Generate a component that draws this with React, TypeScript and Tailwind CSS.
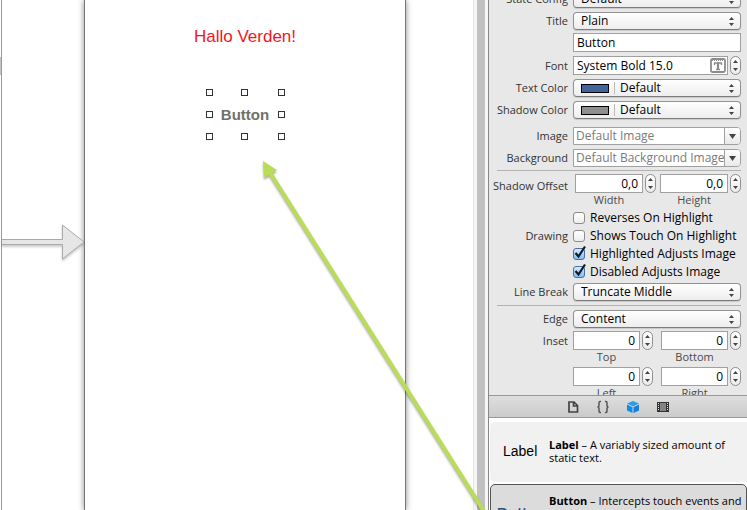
import type { ReactNode } from 'react';

function UpDown() {
  return (
    <svg className="h-[9px] w-[5px] shrink-0" viewBox="0 0 5 9" fill="#444" aria-hidden="true">
      <path d="M2.500 0 5 3H0zM2.500 9 0 6h5z" />
    </svg>
  );
}

function Row({ label, htmlFor, children }: { label: string; htmlFor?: string; children: ReactNode }) {
  return (
    <div className="flex items-center gap-[5px]">
      <label htmlFor={htmlFor} className="w-[79px] shrink-0 whitespace-nowrap text-right text-[11px] leading-[14px] text-[#333]">
        {label}
      </label>
      <div className="flex min-w-0 flex-1 items-center">{children}</div>
    </div>
  );
}

function Popup({ id, value, swatch }: { id: string; value: string; swatch?: string }) {
  return (
    <div className="flex h-[18px] min-w-0 flex-1 items-center rounded-[4px] border border-[#929292] border-b-[#7c7c7c] bg-linear-to-b from-white to-[#ededed] pl-[7px] pr-[6px] shadow-[0_1px_1px_#0002]">
      {swatch && (
        <>
          <span className={`h-[9px] w-7 shrink-0 border border-black ${swatch}`} />
          <span className="ml-[5px] mr-[5px] h-3 w-px shrink-0 bg-[#bbb]" />
        </>
      )}
      <select id={id} defaultValue={value} className="h-4 min-w-0 flex-1 appearance-none bg-transparent text-[12px] leading-4 text-black outline-none">
        <option>{value}</option>
      </select>
      <UpDown />
    </div>
  );
}

function Combo({ id, placeholder }: { id: string; placeholder: string }) {
  return (
    <div className="flex h-[18px] min-w-0 flex-1 overflow-hidden rounded-r-[4px] border border-[#a0a0a0] bg-white">
      <input id={id} placeholder={placeholder} className="h-4 min-w-0 flex-1 pl-[2px] text-[12px] leading-4 outline-none placeholder:text-[#7a7a7a]" />
      <button type="button" aria-label={`Choose ${id}`} className="flex w-4 shrink-0 items-center justify-center border-l border-[#a0a0a0] bg-linear-to-b from-white to-[#e9e9e9]">
        <svg className="h-[5px] w-[7px]" viewBox="0 0 7 5" fill="#444" aria-hidden="true">
          <path d="M0 0h7L3.500 5z" />
        </svg>
      </button>
    </div>
  );
}

function Stepper({ name }: { name: string }) {
  return (
    <div className="flex h-[19px] w-[11px] shrink-0 flex-col overflow-hidden rounded-full border border-[#8e8e8e] bg-linear-to-b from-white to-[#ececec]">
      <button type="button" aria-label={`Increase ${name}`} className="flex flex-1 items-center justify-center">
        <svg className="h-[3px] w-[5px]" viewBox="0 0 5 3" fill="#444"><path d="M2.500 0 5 3H0z" /></svg>
      </button>
      <button type="button" aria-label={`Decrease ${name}`} className="flex flex-1 items-center justify-center">
        <svg className="h-[3px] w-[5px]" viewBox="0 0 5 3" fill="#444"><path d="M2.500 3 0 0h5z" /></svg>
      </button>
    </div>
  );
}

function NumberField({ id, value, caption }: { id: string; value: string; caption: string }) {
  return (
    <div className="grid min-w-0 flex-1 grid-cols-[1fr_11px] items-center gap-x-[2px]">
      <input id={id} defaultValue={value} className="h-[19px] w-full min-w-0 border border-[#a0a0a0] bg-white pr-1 text-right text-[12px] leading-4 text-black outline-none" />
      <Stepper name={caption} />
      <label htmlFor={id} className="text-center text-[11px] leading-[14px] text-[#4a4a4a]">{caption}</label>
    </div>
  );
}

function Check({ id, text, checked }: { id: string; text: string; checked?: boolean }) {
  return (
    <label htmlFor={id} className="flex h-[18px] flex-1 items-center gap-[5px] whitespace-nowrap text-[12px] leading-4 text-black">
      <span className="relative size-3 shrink-0">
        <input id={id} type="checkbox" defaultChecked={checked} className="peer block size-3 appearance-none rounded-[3px] border border-[#8c8c8c] bg-linear-to-b from-white to-[#eee] checked:border-[#4b6f9f] checked:from-[#d5e9fa] checked:to-[#7fbdf0]" />
        <svg className="pointer-events-none absolute -top-[3px] left-0 hidden h-[15px] w-[14px] peer-checked:block" viewBox="0 0 14 15" fill="none" stroke="#111a2c" strokeWidth="2.2">
          <path d="M2.500 8 5.500 11.500 12 1.500" />
        </svg>
      </span>
      {text}
    </label>
  );
}

function Rule() {
  return <hr className="ml-2 border-t border-[#b2b2b2]" />;
}

function Handle({ place }: { place: string }) {
  return <span className={`size-[7px] border border-[#333] bg-white ${place}`} />;
}

function Canvas() {
  return (
    <main className="relative flex min-w-0 flex-1 overflow-hidden bg-white">
      <div className="w-px pt-[57px]">
        <div className="h-[18px] bg-[#c4c4c4]" />
      </div>
      <div className="flex flex-1 items-start border-l border-[#999] pt-[222px]">
        <svg className="h-11 w-full drop-shadow-[0_2px_1px_#0003]" viewBox="0 0 82 44" preserveAspectRatio="xMaxYMid slice" fill="#e6e6e6" stroke="#aaa" aria-hidden="true">
          <path d="M-2 17.500H60.500V3L82 20 60.500 37V22.500H-2z" />
        </svg>
      </div>
      <section className="flex w-[322px] shrink-0 flex-col items-center border-x border-[#777] bg-white font-['Liberation_Sans',Arial,sans-serif] shadow-[0_0_6px_#0007]">
        <p className="mt-[27px] text-[17px] leading-5 text-[#f5141d]">Hallo Verden!</p>
        <div className="mt-[42px] grid h-[51px] w-[79px] grid-cols-3 grid-rows-3 items-center justify-items-center">
          <Handle place="self-start justify-self-start" />
          <Handle place="self-start" />
          <Handle place="self-start justify-self-end" />
          <Handle place="justify-self-start" />
          <button className="whitespace-nowrap text-[15px] font-bold leading-4 text-[#70706a]">Button</button>
          <Handle place="justify-self-end" />
          <Handle place="self-end justify-self-start" />
          <Handle place="self-end" />
          <Handle place="self-end justify-self-end" />
        </div>
      </section>
      <div className="w-[67px]" />
      <div className="flex w-[15px] border-l border-[#e4e4e4] bg-[#f6f6f6] pl-[3px] pr-[3px]">
        <div className="flex-1 bg-[#c1c1c1]" />
      </div>
      <svg className="pointer-events-none absolute right-0 top-0 h-[510px] w-[488px] drop-shadow-[0_2px_1px_#0005]" viewBox="0 0 488 510" aria-hidden="true">
        <path d="M269 171 485 513" stroke="#b9dd56" strokeWidth="4" />
        <path d="M263 161 277 170 264 178z" fill="#b9dd56" />
      </svg>
    </main>
  );
}

function Inspector() {
  return (
    <form className="-mt-[10px] flex flex-col pr-[6px]">
      <div className="flex flex-col gap-1">
        <Row label="State Config" htmlFor="state"><Popup id="state" value="Default" /></Row>
        <Row label="Title" htmlFor="title"><Popup id="title" value="Plain" /></Row>
      </div>
      <div className="mt-[3px] flex flex-col gap-1">
        <Row label="">
          <input aria-label="Title text" defaultValue="Button" className="h-[19px] w-full min-w-0 border border-[#a0a0a0] bg-white pl-[3px] text-[12px] leading-4 text-black outline-none" />
        </Row>
        <Row label="Font" htmlFor="font">
          <div className="flex h-[19px] min-w-0 flex-1 items-center border border-[#a0a0a0] bg-white pr-px">
            <input id="font" defaultValue="System Bold 15.0" className="h-4 min-w-0 flex-1 pl-[3px] text-[12px] leading-4 text-black outline-none" />
            <button aria-label="Choose font" type="button">
              <svg className="h-[15px] w-4" viewBox="0 0 16 15" fill="none" stroke="#8c8c8c" aria-hidden="true">
                <rect x="1" y="1" width="14" height="13" rx="1.500" strokeWidth="1.800" />
                <path d="M2 2.500h12" strokeDasharray="1 1" />
                <path d="M4.500 7V5h7v2M6 11.500h4" strokeWidth="1.300" />
                <path d="M8 4.500V12" strokeWidth="2.200" />
              </svg>
            </button>
          </div>
          <div className="ml-[2px] flex"><Stepper name="font size" /></div>
        </Row>
        <Row label="Text Color" htmlFor="textcolor"><Popup id="textcolor" value="Default" swatch="bg-[#41649b]" /></Row>
        <Row label="Shadow Color" htmlFor="shadowcolor"><Popup id="shadowcolor" value="Default" swatch="bg-[#8e8e8e]" /></Row>
      </div>
      <div className="mb-[3px] mt-2 flex flex-col gap-1">
        <Row label="Image" htmlFor="image"><Combo id="image" placeholder="Default Image" /></Row>
        <Row label="Background" htmlFor="background"><Combo id="background" placeholder="Default Background Image" /></Row>
      </div>
      <Rule />
      <div className="mt-[3px] flex gap-[5px]">
        <span className="w-[79px] shrink-0 whitespace-nowrap pt-[5px] text-right text-[11px] leading-[14px] text-[#333]">Shadow Offset</span>
        <div className="flex min-w-0 flex-1 gap-1 pl-[2px]">
          <NumberField id="width" value="0,0" caption="Width" />
          <NumberField id="height" value="0,0" caption="Height" />
        </div>
      </div>
      <div className="my-[2px]">
        <Row label=""><Check id="reverses" text="Reverses On Highlight" /></Row>
        <Row label="Drawing" htmlFor="touch"><Check id="touch" text="Shows Touch On Highlight" /></Row>
        <Row label=""><Check id="highlighted" text="Highlighted Adjusts Image" checked /></Row>
        <Row label=""><Check id="disabled" text="Disabled Adjusts Image" checked /></Row>
      </div>
      <Row label="Line Break" htmlFor="break"><Popup id="break" value="Truncate Middle" /></Row>
      <div className="my-1"><Rule /></div>
      <Row label="Edge" htmlFor="edge"><Popup id="edge" value="Content" /></Row>
      <div className="mt-[3px] flex gap-[5px]">
        <span className="w-[79px] shrink-0 pt-[3px] text-right text-[11px] leading-[14px] text-[#333]">Inset</span>
        <div className="grid min-w-0 flex-1 grid-cols-2 gap-x-2 gap-y-[3px]">
          <NumberField id="top" value="0" caption="Top" />
          <NumberField id="bottom" value="0" caption="Bottom" />
          <NumberField id="left" value="0" caption="Left" />
          <NumberField id="right" value="0" caption="Right" />
        </div>
      </div>
    </form>
  );
}

function LibraryTabs() {
  return (
    <nav className="flex h-[23px] shrink-0 items-center gap-4 border-y border-[#989898] bg-linear-to-b from-[#dedede] to-[#cbcbcb] pl-[77px]">
      <button aria-label="File templates">
        <svg className="size-[14px]" viewBox="0 0 14 14" fill="none" stroke="#444" strokeWidth="1.700"><path d="M3 2h5l3.500 3.500V12H3zM7.500 2v4H11" /></svg>
      </button>
      <button aria-label="Code snippets">
        <svg className="size-[14px]" viewBox="0 0 14 14" fill="none" stroke="#555" strokeWidth="1.500"><path d="M5 1.500H4Q3 1.500 3 3v2.500Q3 7 1.500 7 3 7 3 8.500V11q0 1.500 1 1.500h1M9 1.500h1q1 0 1 1.500v2.500Q11 7 12.500 7 11 7 11 8.500V11q0 1.500-1 1.500H9" /></svg>
      </button>
      <button aria-label="Objects">
        <svg className="size-[14px]" viewBox="0 0 14 14"><path d="M7 1 13 3.500 7 6.500 1 3.500z" fill="#2a9df0" /><path d="M1 4.500 6.500 7.200V13L1 10.500z" fill="#118be6" /><path d="M13 4.500 7.500 7.200V13L13 10.500z" fill="#1280dc" /></svg>
      </button>
      <button aria-label="Media">
        <svg className="size-[14px]" viewBox="0 0 14 14"><path d="M1 2h12v10H1z" fill="#333" /><path d="M4 3h6v8H4z" fill="#858585" /><path d="M2.500 3v8M11.500 3v8" stroke="#ddd" strokeDasharray="1 1" /></svg>
      </button>
    </nav>
  );
}

function Library() {
  return (
    <ul className="h-[92px] shrink-0 overflow-hidden bg-white pl-px pt-1">
      <li className="mb-[2px] flex h-[60px] items-center rounded-l-[5px] bg-[#f1f1f1] pb-[2px] text-black">
        <span className="w-[59px] shrink-0 pl-[13px] font-['Liberation_Sans',Arial,sans-serif] text-[14px]">Label</span>
        <p className="text-[11px] leading-[13px]"><b>Label</b> – A variably sized amount of static text.</p>
      </li>
      <li className="flex h-[60px] items-center rounded-[5px] border border-[#555] bg-[#dcdcdc] pb-[2px] text-black">
        <span className="w-[58px] shrink-0 pl-[6px] font-['Liberation_Sans',Arial,sans-serif] text-[15px] font-bold text-[#3a5486]">Button</span>
        <p className="text-[11px] leading-[13px]"><b>Button</b> – Intercepts touch events and sends an action message to a target object when it's tapped.</p>
      </li>
    </ul>
  );
}

export default function App() {
  return (
    <div className="flex h-screen overflow-hidden bg-white font-['Open_Sans','Noto_Sans',sans-serif]">
      <Canvas />
      <aside className="flex w-[259px] shrink-0 flex-col border-l border-[#888] bg-[#e8e8e8]">
        <div className="min-h-0 flex-1 overflow-hidden"><Inspector /></div>
        <LibraryTabs />
        <Library />
      </aside>
    </div>
  );
}
